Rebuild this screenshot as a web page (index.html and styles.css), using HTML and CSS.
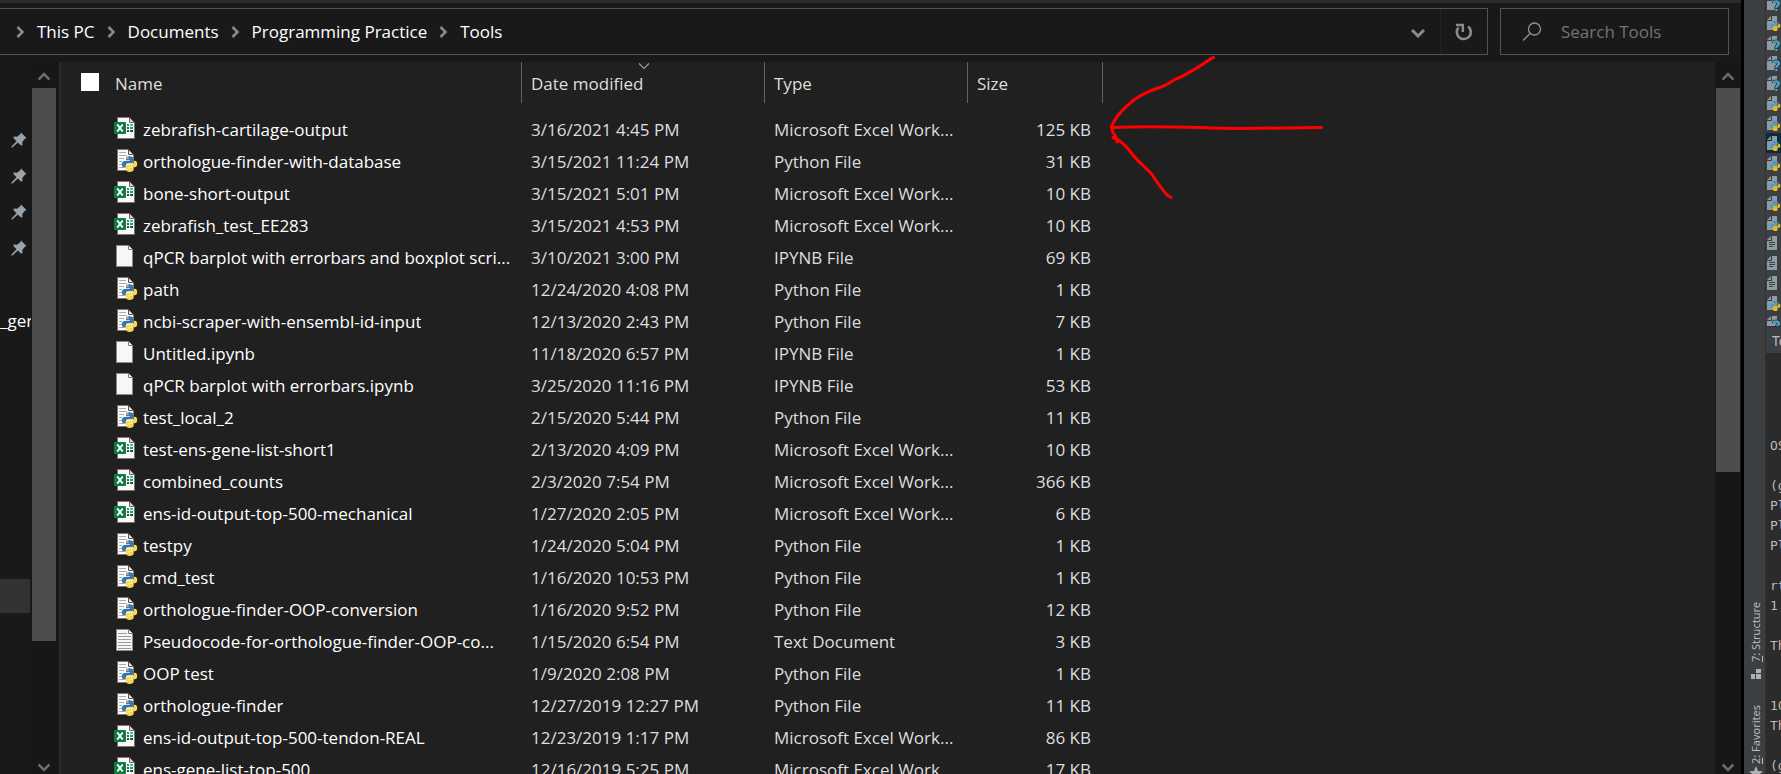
FILE: index.html
```html
<!DOCTYPE html>
<html lang="en">
<head>
<meta charset="utf-8">
<title>Tools</title>
<link rel="stylesheet" href="styles.css">
</head>
<body>
<svg width="0" height="0" class="defs" aria-hidden="true">
  <symbol id="chev" viewBox="0 0 8 12"><path d="M1.5 1l5 5-5 5" fill="none" stroke="#8b8b8b" stroke-width="2.6"/></symbol>
  <symbol id="up" viewBox="0 0 12 10"><path d="M.5 8.5L6 3l5.500 5.500" fill="none" stroke="#6c6c6c" stroke-width="2.600"/></symbol>
  <symbol id="down" viewBox="0 0 12 10"><path d="M.5 1.500L6 7l5.500-5.500" fill="none" stroke="#6c6c6c" stroke-width="2.600"/></symbol>
  <symbol id="pin" viewBox="0 0 16 16"><path d="M10 .5L15.500 6l-1.600.8-2.600 3.200.2 2.800-1.200 1L6.800 10.500 1.500 15.500H.5v-1L5.500 9.200 2.200 5.800l1-1.200 2.800.2L9.300 2.200z" fill="#9aa3aa"/></symbol>
  <symbol id="snakes" viewBox="0 0 16 16"><path d="M8 .3C5.500.3 4.600 1.200 4.600 2.600V4.300H8.300V5H3C1.300 5 .3 6.300.3 8.200s.9 3.300 2.500 3.300H4.300V9.600c0-1.300 1-2.300 2.400-2.300H10c1 0 1.800-.8 1.800-1.900V2.600C11.800 1.200 10.500.3 8 .3z" fill="var(--blue)"/><circle cx="6.400" cy="2.300" r=".7" fill="var(--eye)"/><path d="M8.200 15.900c2.500 0 3.500-.9 3.500-2.300v-1.700H8v-.7h5.300c1.600 0 2.500-1.300 2.500-3.200s-.9-3.300-2.500-3.300h-.8v1.700c0 1.300-1.100 2.400-2.400 2.400H6.500c-1 0-1.900.8-1.900 1.900v2.900c0 1.400 1.200 2.300 3.600 2.300z" fill="var(--yellow)"/></symbol>
  <symbol id="xls" viewBox="0 0 24 24"><path d="M3.500 1.500H15.500L20.500 6.500V22.500H3.500z" fill="#fafafa" stroke="#777"/><path d="M15.500 1.500V6.500H20.500z" fill="#d8d8d8" stroke="#666"/><rect x="13" y="8" width="2" height="2" fill="#21a366"/><rect x="16" y="8" width="3" height="2" fill="#33c481"/><rect x="13" y="11" width="2" height="2" fill="#107c41"/><rect x="16" y="11" width="3" height="2" fill="#21a366"/><rect x="13" y="14" width="2" height="2" fill="#185c37"/><rect x="16" y="14" width="3" height="2" fill="#185c37"/><rect x="0" y="6" width="12" height="12" rx="1" fill="#107c41"/><path d="M3.300 8.500l5.400 7M8.700 8.500l-5.400 7" stroke="#fff" stroke-width="1.900"/></symbol>
  <symbol id="py" viewBox="0 0 24 24"><path d="M3.500 1.500H14.500L19.500 6.500V22.500H3.500z" fill="#fafafa" stroke="#777"/><path d="M14.500 1.500V6.500H19.500z" fill="#e4e4e4" stroke="#555"/><path d="M5 4.500h7M5 7.500h8M5 10.500h5M5 13.500h3M5 16.500h3M5 19.500h5" stroke="#aaa"/><use href="#snakes" x="7.500" y="8" width="16" height="16"/></symbol>
  <symbol id="blank" viewBox="0 0 24 24"><path d="M2.500 1.500H14.500L18.500 5.500V22.500H2.500z" fill="#f5f7f9" stroke="#8a8a8a"/><path d="M14.500 1.500V5.500H18.500" fill="#fff" stroke="#777"/></symbol>
  <symbol id="txt" viewBox="0 0 24 24"><path d="M2.500 1.500H14.500L18.500 5.500V22.500H2.500z" fill="#f5f7f9" stroke="#8a8a8a"/><path d="M14.500 1.500V5.500H18.500" fill="#fff" stroke="#777"/><path d="M4 5.500h9M4 8.500h13M4 11.500h13M4 14.500h13M4 17.500h13M4 20.500h13" stroke="#999"/></symbol>
  <symbol id="ipage" viewBox="0 0 16 16"><path d="M6 1h5v14H1V6h5z" fill="#8f9ba3"/><path d="M1 5l4-4v4z" fill="#8f9ba3"/></symbol>
  <symbol id="ipy" viewBox="0 0 16 16"><use href="#ipage"/><use href="#snakes" x="4" y="5.500" width="10.500" height="10.500"/></symbol>
  <symbol id="iq" viewBox="0 0 16 16"><use href="#ipage"/><path d="M7.500 8.200C7.500 5.600 12.800 5.400 12.800 8.300c0 2-2.600 2-2.600 4.100V16" fill="none" stroke="#3c3f41" stroke-width="3.600"/><path d="M7.600 8.600C7.600 5.700 13 5.700 13 8.500c0 1.900-2.700 2-2.700 4.200M10.300 14v2" fill="none" stroke="#40b6e0" stroke-width="1.900"/></symbol>
  <symbol id="itxt" viewBox="0 0 16 16"><use href="#ipage"/><path d="M3 7.500h6M3 9.500h6M3 11.500h4" stroke="#3c3f41"/></symbol>
</svg>

<section class="explorer">
  <header class="topbar">
    <nav class="address" aria-label="Address">
      <svg class="chev"><use href="#chev"/></svg><a href="#">This PC</a>
      <svg class="chev"><use href="#chev"/></svg><a href="#">Documents</a>
      <svg class="chev"><use href="#chev"/></svg><a href="#">Programming Practice</a>
      <svg class="chev"><use href="#chev"/></svg><a href="#">Tools</a>
      <button class="history" aria-label="Previous locations"><svg width="14" height="10" viewBox="0 0 14 10"><path d="M1 2l6 6 6-6" fill="none" stroke="#8b8b8b" stroke-width="3"/></svg></button>
      <button class="refresh" aria-label="Refresh"><svg width="18" height="18" viewBox="0 0 18 18"><path d="M13.200 3.600A7 7 0 1 1 3.500 4.500" fill="none" stroke="#8b8b8b" stroke-width="2.600"/><path d="M1 2h6.800v7" fill="none" stroke="#8b8b8b" stroke-width="2.400"/></svg></button>
    </nav>
    <label class="search">
      <svg width="20" height="20" viewBox="0 0 20 20"><circle cx="12.500" cy="7" r="6" fill="none" stroke="#909090" stroke-width="1.300"/><path d="M8 11.500L1 18.500" stroke="#909090" stroke-width="1.300"/></svg>
      <input type="text" placeholder="Search Tools" aria-label="Search Tools">
    </label>
  </header>

  <div class="content">
    <aside class="tree">
      <ul class="pins">
        <li><svg><use href="#pin"/></svg></li>
        <li><svg><use href="#pin"/></svg></li>
        <li><svg><use href="#pin"/></svg></li>
        <li><svg><use href="#pin"/></svg></li>
      </ul>
      <div class="folder">_ger</div>
      <div class="current"></div>
    </aside>
    <div class="scroll left">
      <button aria-label="Scroll tree up"><svg><use href="#up"/></svg></button>
      <div class="track"><div class="thumb tree-thumb"></div></div>
      <button aria-label="Scroll tree down"><svg><use href="#down"/></svg></button>
    </div>
    <main class="files">
      <table>
        <colgroup><col class="c-name"><col class="c-date"><col class="c-type"><col class="c-size"></colgroup>
        <thead><tr>
          <th class="name"><div class="name-head"><input type="checkbox" aria-label="Select all"><span>Name</span></div></th>
          <th class="sorted">Date modified<svg width="12" height="7" viewBox="0 0 12 7"><path d="M1 .5l5 5 5-5" fill="none" stroke="#9a9a9a" stroke-width="1.200"/></svg></th>
          <th>Type</th><th>Size</th>
        </tr></thead>
        <tbody id="rows"></tbody>
      </table>
    </main>
    <div class="scroll right">
      <button aria-label="Scroll files up"><svg><use href="#up"/></svg></button>
      <div class="track"><div class="thumb file-thumb"></div></div>
      <button aria-label="Scroll files down"><svg><use href="#down"/></svg></button>
    </div>
  </div>
  <svg class="arrow" width="220" height="150" viewBox="0 0 220 150" fill="none" stroke="#f00" stroke-width="3" stroke-linecap="round" stroke-linejoin="round"><path d="M103.500 7.500C97 10 92 16 84 19.500C78 23 72 27 66 29C60 32 56 36 48 38C36 42 26 47 18 55C10 62 4 70 1 77.500C60 75 90 78.500 130 78.500L211.500 77.500"/><path d="M3 77L2 81L6 87L7 92M3 87.500C12 91 18 98 23 105C29 113 38 119 43 126C48 134 53 140 57 145L61 147.500"/></svg>
</section>

<section class="ide">
  <div class="gutter">
    <button><svg width="10" height="10" viewBox="0 0 10 10" fill="#afb1b3"><path d="M0 5h4v5H0zM5 0h5v4H5zM5 5h5v5H5z"/></svg><span><u>7</u>: Structure</span></button>
    <button><svg width="14" height="14" viewBox="0 0 14 14"><path d="M7 0l2 5 5 .3-4 3.400L11.400 14 7 11l-4.400 3L4 8.700 0 5.300 5 5z" fill="#afb1b3"/></svg><span><u>2</u>: Favorites</span></button>
  </div>
  <div class="pane">
    <ul class="project" id="project"></ul>
    <div class="tab">Te</div>
    <pre class="console" id="console"></pre>
  </div>
</section>
<script src="app.js"></script>
</body>
</html>
```
FILE: styles.css
```css
* { box-sizing: border-box; }
body {
  margin: 0;
  height: 100vh;
  display: flex;
  overflow: hidden;
  background: #000;
  color: #fff;
  font: 17px/24px "Open Sans", "Noto Sans", sans-serif;
}
button { margin: 0; padding: 0; border: 0; background: none; color: inherit; font: inherit; }
ul { margin: 0; padding: 0; list-style: none; }
.defs { position: absolute; }

.explorer { position: relative; flex: 1; min-width: 0; display: flex; flex-direction: column; background: #191919; }
.topbar { display: flex; gap: 12px; padding: 5px 12px 7px 0; border-top: 3px solid #2b2b2b; }
.address { flex: 1; display: flex; align-items: center; height: 47px; padding-left: 16px; border: 1px solid #535353; border-left: 0; }
.address a { color: #fff; text-decoration: none; margin: 0 12px 0 13px; white-space: nowrap; }
.chev { width: 8px; height: 12px; flex: none; }
.history { margin-left: auto; width: 44px; }
.refresh { width: 47px; height: 100%; border-left: 1px solid #222; display: grid; place-items: center; }
.search { width: 229px; display: flex; align-items: center; gap: 19px; padding-left: 21px; border: 1px solid #535353; }
.search svg { flex: none; }
.search input { width: 100%; min-width: 0; padding: 0; border: 0; outline: 0; background: none; color: #fff; font: inherit; }
.search input::placeholder { color: #747474; opacity: 1; }

.content { flex: 1; min-height: 0; display: flex; }
.tree { width: 31px; overflow: hidden; }
.pins { padding-top: 60px; }
.pins li { height: 36px; padding: 10px 0 0 11px; }
.pins svg { display: block; width: 16px; height: 16px; }
.folder { margin-top: 43px; height: 24px; }
.current { margin: 246px 1px 0 0; height: 34px; background: #333; }

.scroll { display: flex; flex-direction: column; background: #171717; }
.scroll button { height: 26px; padding-top: 2px; display: grid; place-items: center; }
.scroll .track + button { height: 12px; padding: 0; }
.scroll button svg { width: 12px; height: 10px; }
.scroll.left { width: 28px; padding: 0 3px 0 1px; }
.scroll.right { width: 26px; padding: 0 1px; }
.track { flex: 1; }
.thumb { background: #4d4d4d; }
.tree-thumb { height: 82%; }
.file-thumb { height: 57%; }

.files { flex: 1; min-width: 0; overflow: hidden; background: #202020; border-left: 2px solid #2b2b2b; }
table { table-layout: fixed; width: 1042px; border-collapse: separate; border-spacing: 0; }
.c-name { width: 461px; }
.c-date { width: 243px; }
.c-type { width: 203px; }
.c-size { width: 135px; }
th { height: 41px; padding: 2px 9px 0; border-right: 1px solid #636363; text-align: left; font-weight: 400; color: #dedede; }
.name-head { display: flex; align-items: center; gap: 16px; padding-left: 11px; }
.name-head input { appearance: none; width: 18px; height: 18px; margin: 0 0 3px; background: #fff; }
.sorted { position: relative; }
.sorted svg { position: absolute; top: 1px; left: calc(50% - 5px); }
tbody::before { content: ""; display: block; height: 11px; }
td { height: 32px; padding: 0 9px; color: #dedede; white-space: nowrap; overflow: hidden; text-overflow: ellipsis; }
td.size { text-align: right; padding-right: 12px; }
.file { display: flex; align-items: center; gap: 5px; padding-left: 44px; color: #fff; --blue: #3b76a8; --yellow: #ffd845; --eye: #fff; }
.file svg { flex: none; width: 24px; height: 24px; margin-bottom: 4px; }
.file span { overflow: hidden; text-overflow: ellipsis; }

.arrow { position: absolute; left: 1110px; top: 50px; }

.ide { width: 40px; display: flex; padding-left: 3px; }
.gutter { width: 21px; display: flex; flex-direction: column; justify-content: flex-end; gap: 26px; background: #3c3f41; color: #bbb; font: 11px/16px "Noto Sans", sans-serif; }
.gutter button { display: flex; flex-direction: column-reverse; align-items: center; gap: 7px; padding-left: 2px; }
.gutter button:last-child { gap: 2px; margin-bottom: -6px; }
.gutter span { writing-mode: vertical-rl; transform: rotate(180deg); }
.pane { flex: 1; min-width: 0; overflow: hidden; display: flex; flex-direction: column; background: #2b2b2b; border-left: 1px solid #323232; }
.project { flex: none; height: 326px; overflow: hidden; display: flex; flex-direction: column; background: #3c3f41; --blue: #4a9cc9; --yellow: #f2bf0c; --eye: #3c3f41; }
.project li { flex: none; height: 20px; padding-top: 2px; }
.project li:first-child { height: 13px; padding: 0; display: flex; align-items: flex-end; overflow: hidden; }
.project li:first-child svg { margin-bottom: 2px; flex: none; }
.project svg { display: block; width: 16px; height: 16px; }
.project .selected { background: #0d293e; }
.tab { height: 27px; padding: 2px 0 0 6px; background: #3c3f41; border-top: 1px solid #323232; color: #bbb; font: 14px/24px "Noto Sans", sans-serif; }
.console { margin: 0; padding: 83px 0 0 4px; color: #bbb; font: 13px/20px "DejaVu Sans Mono", monospace; }
```
FILE: app.js
```js
const types = { xls: "Microsoft Excel Work...", py: "Python File", blank: "IPYNB File", txt: "Text Document" };
const files = [
  ["xls", "zebrafish-cartilage-output", "3/16/2021 4:45 PM", 125],
  ["py", "orthologue-finder-with-database", "3/15/2021 11:24 PM", 31],
  ["xls", "bone-short-output", "3/15/2021 5:01 PM", 10],
  ["xls", "zebrafish_test_EE283", "3/15/2021 4:53 PM", 10],
  ["blank", "qPCR barplot with errorbars and boxplot scri...", "3/10/2021 3:00 PM", 69],
  ["py", "path", "12/24/2020 4:08 PM", 1],
  ["py", "ncbi-scraper-with-ensembl-id-input", "12/13/2020 2:43 PM", 7],
  ["blank", "Untitled.ipynb", "11/18/2020 6:57 PM", 1],
  ["blank", "qPCR barplot with errorbars.ipynb", "3/25/2020 11:16 PM", 53],
  ["py", "test_local_2", "2/15/2020 5:44 PM", 11],
  ["xls", "test-ens-gene-list-short1", "2/13/2020 4:09 PM", 10],
  ["xls", "combined_counts", "2/3/2020 7:54 PM", 366],
  ["xls", "ens-id-output-top-500-mechanical", "1/27/2020 2:05 PM", 6],
  ["py", "testpy", "1/24/2020 5:04 PM", 1],
  ["py", "cmd_test", "1/16/2020 10:53 PM", 1],
  ["py", "orthologue-finder-OOP-conversion", "1/16/2020 9:52 PM", 12],
  ["txt", "Pseudocode-for-orthologue-finder-OOP-co...", "1/15/2020 6:54 PM", 3],
  ["py", "OOP test", "1/9/2020 2:08 PM", 1],
  ["py", "orthologue-finder", "12/27/2019 12:27 PM", 11],
  ["xls", "ens-id-output-top-500-tendon-REAL", "12/23/2019 1:17 PM", 86],
  ["xls", "ens-gene-list-top-500", "12/16/2019 5:25 PM", 17]
];
document.getElementById("rows").innerHTML = files.map(([icon, name, date, size]) =>
  `<tr><td><div class="file"><svg><use href="#${icon}"/></svg><span>${name}</span></div></td><td>${date}</td><td>${types[icon]}</td><td class="size">${size} KB</td></tr>`).join("");

const project = "iq ipy iq iq iq ipy ipy ipy ipy ipy ipy ipy itxt itxt itxt ipy iq".split(" ");
document.getElementById("project").innerHTML = project.map((icon, i) =>
  `<li${i === 7 ? ' class="selected"' : ""}><svg><use href="#${icon}"/></svg></li>`).join("");

const lines = ["OS", "", "(g", "Pl", "Pl", "Pl", "", "rt", "1", "", "Th", "", "", "10", "Th", "", "(g"];
document.getElementById("console").textContent = lines.join("\n");
```
